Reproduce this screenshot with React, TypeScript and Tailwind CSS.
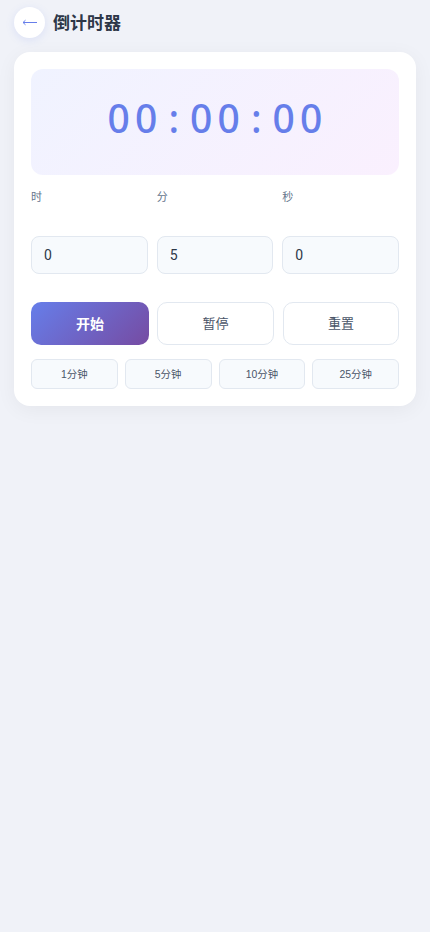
const fontStack = "font-['Liberation_Sans','Noto_Sans_CJK_SC',sans-serif]";

function TimeField({ label, value }: { label: string; value: string }) {
  return (
    <div className="flex flex-col">
      <label className="h-[52px] pt-[5px] text-[11px] leading-[16px] text-[#64748b]">{label}</label>
      <input
        type="number"
        defaultValue={value}
        className="h-[38px] w-full rounded-lg border border-[#e2e8f0] bg-[#f7fafd] px-3 text-sm text-[#2d3748] font-['Roboto','Noto_Sans_CJK_SC',sans-serif] outline-none"
      />
    </div>
  );
}

const presets = ["1分钟", "5分钟", "10分钟", "25分钟"];
const digits = ["0", "0", ":", "0", "0", ":", "0", "0"];

export default function App() {
  return (
    <div className={`min-h-[932px] bg-[#f0f2f8] px-[14px] pt-[7px] ${fontStack}`}>
      <div className="flex h-[31px] items-center gap-2">
        <button className="flex h-[31px] w-[31px] items-center justify-center rounded-full bg-white shadow-[0_2px_8px_rgba(102,126,234,0.15)]">
          <svg width="15" height="7" viewBox="0 0 15 7" fill="none" stroke="#667eea" strokeWidth="1">
            <path d="M15 3.5H1" />
            <path d="M3.5 1.2L1 3.5l2.5 2.3" />
          </svg>
        </button>
        <h1 className="pt-[2px] text-[17px] leading-[24px] font-bold text-[#2d3748]">倒计时器</h1>
      </div>

      <div className="mt-[14px] h-[354px] rounded-2xl bg-white p-[17px] shadow-[0_4px_20px_rgba(0,0,0,0.05)]">
        <div className="flex h-[106px] items-center justify-center rounded-xl bg-[linear-gradient(135deg,#f0f3ff,#faf0fe)] pb-[7px] text-[39px] font-medium text-[#667eea] font-['Noto_Sans',sans-serif]">
          {digits.map((d, i) => (
            <span key={i} className="w-[27.5px] text-center">
              {d}
            </span>
          ))}
        </div>

        <div className="mt-[9px] grid grid-cols-3 gap-[9px]">
          <TimeField label="时" value="0" />
          <TimeField label="分" value="5" />
          <TimeField label="秒" value="0" />
        </div>

        <div className="mt-7 grid grid-cols-[118px_117px_1fr] gap-2">
          <button className="h-[43px] rounded-[10px] bg-[linear-gradient(135deg,#667eea,#764ba2)] text-sm font-bold text-white">开始</button>
          <button className="h-[43px] rounded-[10px] border border-[#e2e8f0] bg-white text-[13px] text-[#4a5568]">暂停</button>
          <button className="ml-px h-[43px] rounded-[10px] border border-[#e2e8f0] bg-white text-[13px] text-[#4a5568]">重置</button>
        </div>

        <div className="mt-[14px] grid grid-cols-4 gap-[7px]">
          {presets.map((p) => (
            <button key={p} className="h-[30px] rounded-md border border-[#e2e8f0] bg-[#f7fafd] pt-px text-[10.4px] text-[#4a5568]">
              {p}
            </button>
          ))}
        </div>
      </div>
    </div>
  );
}
